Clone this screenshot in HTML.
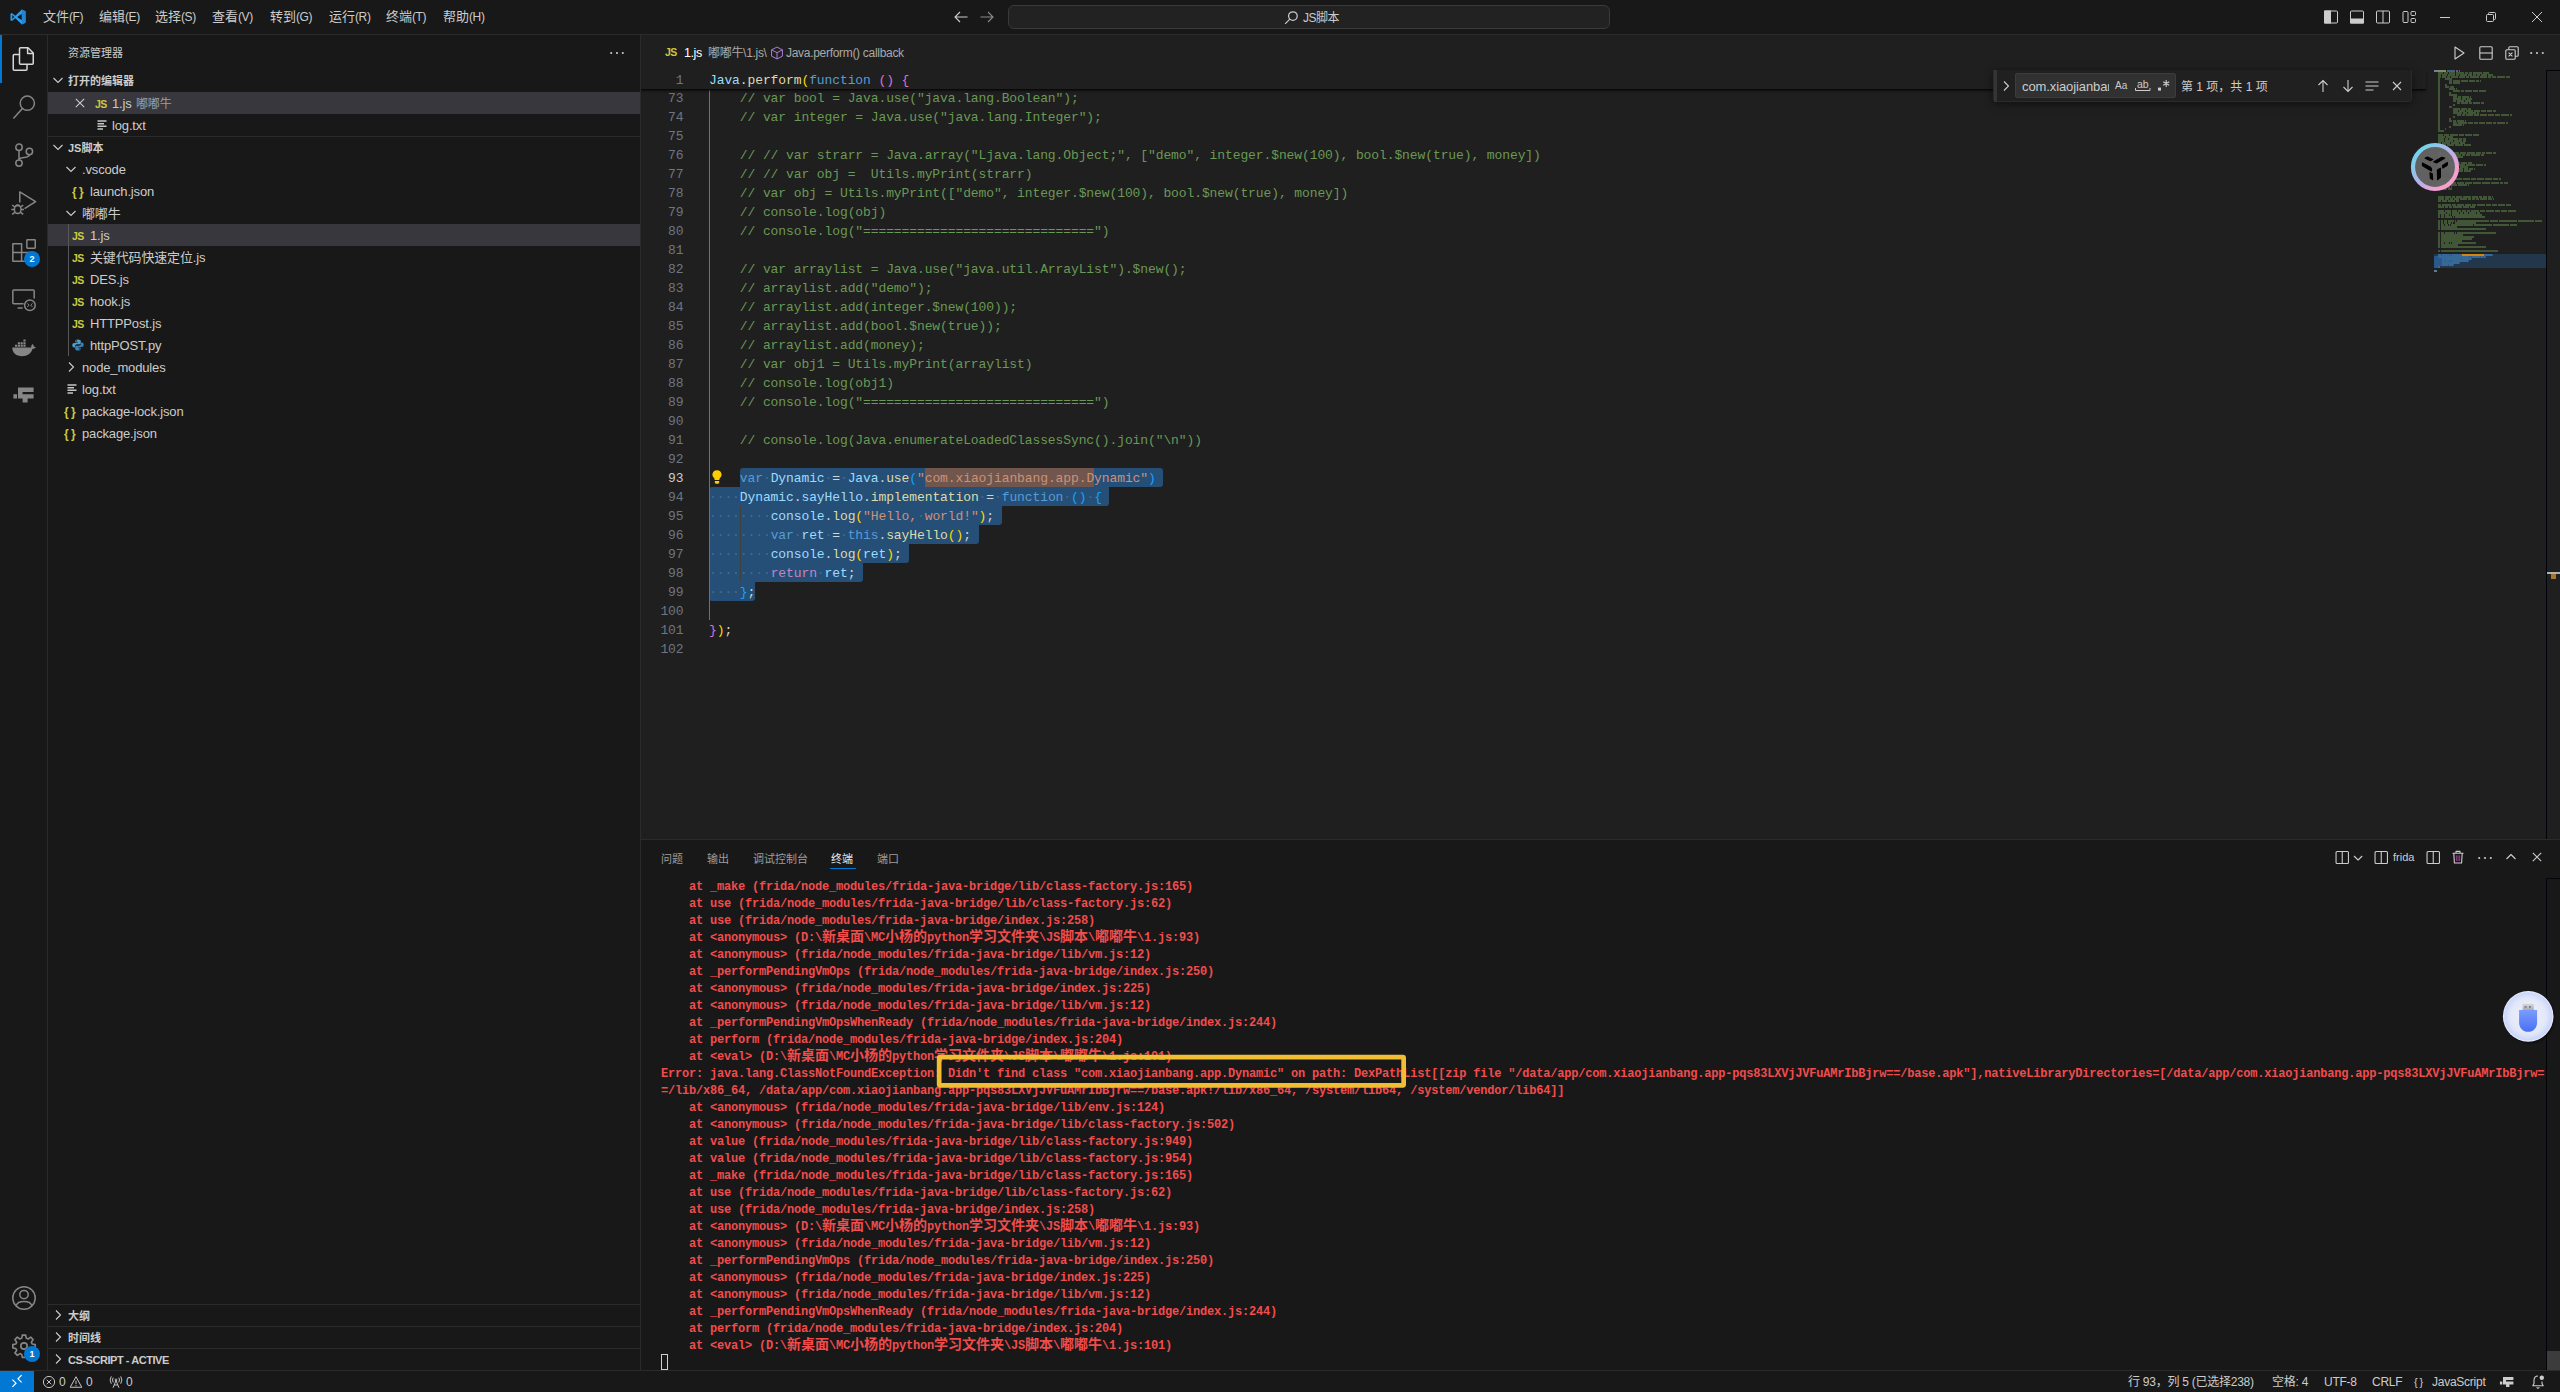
<!DOCTYPE html>
<html lang="zh-CN">
<head>
<meta charset="utf-8">
<title>1.js - JS脚本 - Visual Studio Code</title>
<style>
*{box-sizing:border-box;margin:0;padding:0}
html,body{width:2560px;height:1392px;overflow:hidden;background:#181818}
body{position:relative;font-family:"Liberation Sans","Noto Sans CJK SC",sans-serif;font-size:13px;color:#cccccc;-webkit-font-smoothing:antialiased}
.abs{position:absolute}
svg{display:block;overflow:visible}
/* ---------- title bar ---------- */
#title{position:absolute;left:0;top:0;width:2560px;height:35px;background:#181818;border-bottom:1px solid #2b2b2b}
#title .menu{position:absolute;top:0;height:34px;line-height:34px;font-size:13px;color:#cccccc;white-space:nowrap}
#title .menu i{font-style:normal;font-size:12px;letter-spacing:-0.4px}
#cmd{position:absolute;left:1008px;top:5px;width:602px;height:24px;border:1px solid #3a3a3a;border-radius:6px;background:#222222}
#cmd span{position:absolute;left:294px;top:1px;line-height:22px;font-size:12px;color:#cccccc;letter-spacing:-0.5px}
/* ---------- activity bar ---------- */
#act{position:absolute;left:0;top:35px;width:48px;height:1335px;background:#181818;border-right:1px solid #2b2b2b}
#act .ind{position:absolute;left:0;top:0;width:2px;height:48px;background:#0078d4}
.badge{position:absolute;width:16px;height:16px;border-radius:8px;background:#0078d4;color:#fff;font-size:9px;font-weight:bold;line-height:16px;text-align:center}
/* ---------- side bar ---------- */
#side{position:absolute;left:48px;top:35px;width:593px;height:1335px;background:#181818;border-right:1px solid #2b2b2b}
#side .row{position:absolute;left:0;width:592px;height:22px;line-height:22px;white-space:nowrap;color:#cccccc;font-size:13px}
#side .row.sel{background:#37373d}
#side .hdr{font-weight:bold;font-size:11px}
#side .hline{position:absolute;left:0;width:592px;height:1px;background:#2b2b2b}
.t{position:absolute;top:1px;letter-spacing:-0.15px}
.hdr .t{letter-spacing:0}
.hdr .t.cs{letter-spacing:-0.45px}
.js{position:absolute;top:1px;font-size:10.5px;font-weight:bold;color:#cbcb41;letter-spacing:-0.7px}
.json{position:absolute;top:0.5px;font-size:12px;font-weight:bold;color:#cbcb41}
.dim{color:#9d9d9d;font-size:12px}
/* ---------- editor ---------- */
#ed{position:absolute;left:641px;top:35px;width:1919px;height:804px;background:#1f1f1f;overflow:hidden}
.bc{line-height:22px;font-size:12px;color:#a9a9a9;white-space:nowrap;letter-spacing:-0.3px}
#code{position:absolute;left:0;top:0;width:1919px;height:804px}
.ln{margin-top:1px;position:absolute;left:0;width:42.5px;height:19px;line-height:19px;text-align:right;font-family:"Liberation Mono","DejaVu Sans Mono",monospace;font-size:13px;letter-spacing:-0.1px;color:#6e7681}
.ln.cur{color:#cccccc}
.cl{margin-top:1px;position:absolute;left:68px;height:19px;line-height:19px;white-space:pre;font-family:"Liberation Mono","DejaVu Sans Mono",monospace;font-size:13px;letter-spacing:-0.1px;color:#d4d4d4}
.cl span,.cl i{display:inline}
i.ws{font-style:normal;color:rgba(255,255,255,0.17)}
.selr{position:absolute;height:19px;background:#264f78}
#sticky{position:absolute;left:0;top:35px;width:1785px;height:19px;background:#1f1f1f;box-shadow:0 1px 0 #090909, 0 2px 2px rgba(0,0,0,0.6)}
#find{position:absolute;left:1352px;top:35px;width:419px;height:32px;background:#202020;border:1px solid #2b2b2b;border-top:none;border-radius:0 0 4px 4px;box-shadow:0 2px 8px rgba(0,0,0,0.5)}
/* ---------- panel ---------- */
#panel{position:absolute;left:641px;top:839px;width:1919px;height:531px;background:#181818;border-top:1px solid #2b2b2b;overflow:hidden}
.ptab{position:absolute;top:8px;line-height:22px;font-size:11px;color:#9d9d9d;white-space:nowrap}
.ptab.act{color:#e7e7e7}
#term{position:absolute;left:20px;top:0;width:1900px;height:531px}
.tl{position:absolute;left:0;height:17px;line-height:17px;white-space:pre;font-family:"Liberation Mono","Noto Sans CJK SC",monospace;font-weight:bold;font-size:12px;letter-spacing:-0.2px;color:#f14c4c}
.tl b.cj{line-height:0;font-family:"Noto Sans CJK SC",sans-serif;font-weight:bold;font-size:14px;letter-spacing:0}
/* ---------- status ---------- */
#status{position:absolute;left:0;top:1370px;width:2560px;height:22px;background:#181818;border-top:1px solid #2b2b2b;font-size:12px;color:#cccccc}
#status .s{position:absolute;top:1px;line-height:21px;white-space:nowrap;letter-spacing:-0.25px}
</style>
</head>
<body>
<div id="title">
  <svg class="abs" style="left:10px;top:9px" width="16" height="16" viewBox="0 0 100 100"><path d="M74 3 L97 14 V86 L74 97 L33 58 L12 75 L3 70 V30 L12 25 L33 42 Z M74 29 L45 50 L74 71 Z M14 38 V62 L27 50 Z" fill="#2a9df0" fill-rule="evenodd"/><path d="M74 3 L97 14 V86 L74 97 Z" fill="#1f86d6"/></svg>
  <div class="menu" style="left:43px">文件<i>(F)</i></div>
  <div class="menu" style="left:99px">编辑<i>(E)</i></div>
  <div class="menu" style="left:155px">选择<i>(S)</i></div>
  <div class="menu" style="left:212px">查看<i>(V)</i></div>
  <div class="menu" style="left:270px">转到<i>(G)</i></div>
  <div class="menu" style="left:329px">运行<i>(R)</i></div>
  <div class="menu" style="left:386px">终端<i>(T)</i></div>
  <div class="menu" style="left:443px">帮助<i>(H)</i></div>
  <svg class="abs" style="left:953px;top:9px" width="16" height="16" viewBox="0 0 16 16" fill="none" stroke="#cccccc" stroke-width="1.1"><path d="M14.5 8 H2 M7 3 L2 8 L7 13"/></svg>
  <svg class="abs" style="left:979px;top:9px" width="16" height="16" viewBox="0 0 16 16" fill="none" stroke="#8a8a8a" stroke-width="1.1"><path d="M1.5 8 H14 M9 3 L14 8 L9 13"/></svg>
  <div id="cmd">
    <svg class="abs" style="left:275px;top:4px" width="15" height="15" viewBox="0 0 16 16" fill="none" stroke="#cccccc" stroke-width="1.3"><circle cx="9.5" cy="6.5" r="4.6"/><path d="M6.2 9.8 L1.2 14.8"/></svg>
    <span>JS脚本</span>
  </div>
  <!-- layout controls -->
  <svg class="abs" style="left:2323px;top:9px" width="16" height="16" viewBox="0 0 16 16" fill="none" stroke="#cccccc" stroke-width="1"><rect x="1.5" y="2" width="13" height="12" rx="1"/><rect x="1.5" y="2" width="6" height="12" fill="#cccccc"/></svg>
  <svg class="abs" style="left:2349px;top:9px" width="16" height="16" viewBox="0 0 16 16" fill="none" stroke="#cccccc" stroke-width="1"><rect x="1.5" y="2" width="13" height="12" rx="1"/><rect x="1.5" y="10" width="13" height="4" fill="#cccccc"/></svg>
  <svg class="abs" style="left:2375px;top:9px" width="16" height="16" viewBox="0 0 16 16" fill="none" stroke="#cccccc" stroke-width="1"><rect x="1.5" y="2" width="13" height="12" rx="1"/><path d="M8 2 V14"/></svg>
  <svg class="abs" style="left:2401px;top:9px" width="16" height="16" viewBox="0 0 16 16" fill="none" stroke="#cccccc" stroke-width="1"><rect x="2" y="2.5" width="5" height="11" rx="1"/><rect x="10" y="2.5" width="4.5" height="4" rx="1"/><rect x="10" y="9.5" width="4.5" height="4" rx="1"/></svg>
  <svg class="abs" style="left:2437px;top:9px" width="16" height="16" viewBox="0 0 16 16" fill="none" stroke="#cccccc" stroke-width="1"><path d="M3 8.5 H13"/></svg>
  <svg class="abs" style="left:2483px;top:9px" width="16" height="16" viewBox="0 0 16 16" fill="none" stroke="#cccccc" stroke-width="1"><rect x="3.5" y="5.5" width="7" height="7" rx="1"/><path d="M5.5 5.5 V4.5 Q5.5 3.5 6.5 3.5 H11.5 Q12.5 3.5 12.5 4.5 V9.5 Q12.5 10.5 11.5 10.5 H10.5"/></svg>
  <svg class="abs" style="left:2529px;top:9px" width="16" height="16" viewBox="0 0 16 16" fill="none" stroke="#cccccc" stroke-width="1"><path d="M3 3 L13 13 M13 3 L3 13"/></svg>
</div>

<div id="act">
  <div class="ind"></div>
  <!-- explorer (active) -->
  <svg class="abs" style="left:12px;top:12px" width="24" height="24" viewBox="0 0 24 24" fill="none" stroke="#d7d7d7" stroke-width="1.5" stroke-linejoin="round"><path d="M8.5 0.75 H16 L21.25 6 V16.25 Q21.25 17.25 20.25 17.25 H8.5 Q7.5 17.25 7.5 16.25 V1.75 Q7.5 0.75 8.5 0.75 Z"/><path d="M15.6 1 V6.4 H21"/><path d="M7.3 7.5 H2.25 Q1.25 7.5 1.25 8.5 V22.25 Q1.25 23.25 2.25 23.25 H14 Q15 23.25 15 22.25 V17.5"/></svg>
  <!-- search -->
  <svg class="abs" style="left:12px;top:60px" width="24" height="24" viewBox="0 0 24 24" fill="none" stroke="#868686" stroke-width="1.5"><circle cx="15.3" cy="8.2" r="7.1"/><path d="M10.4 13.4 L1.4 23.4"/></svg>
  <!-- scm -->
  <svg class="abs" style="left:12px;top:108px" width="24" height="24" viewBox="0 0 24 24" fill="none" stroke="#868686" stroke-width="1.5"><circle cx="7" cy="4.2" r="3.2"/><circle cx="7" cy="20.1" r="3.2"/><circle cx="17.4" cy="8.5" r="3.2"/><path d="M7 7.4 V16.9 M17.4 11.7 C17.4 16 7 13 7 16.9"/></svg>
  <!-- debug -->
  <svg class="abs" style="left:12px;top:156px" width="24" height="24" viewBox="0 0 24 24" fill="none" stroke="#868686" stroke-width="1.5" stroke-linejoin="round"><path d="M7.8 11.4 V0.9 L23.6 10.6 L12.6 17.6"/><ellipse cx="5.7" cy="18.6" rx="3.3" ry="4"/><path d="M3.4 15.2 Q5.7 12.8 8 15.2 M-0.6 18.6 H2.4 M9 18.6 H12 M0.2 14.2 L2.8 16 M11.2 14.2 L8.6 16 M0.2 23.4 L2.8 21.4 M11.2 23.4 L8.6 21.4"/></svg>
  <!-- extensions -->
  <svg class="abs" style="left:12px;top:204px" width="24" height="24" viewBox="0 0 24 24" fill="none" stroke="#868686" stroke-width="1.5" stroke-linejoin="round"><path d="M0.85 4.75 H9.6 V13.5 H0.85 Z M0.85 13.5 V22.25 H9.6 V13.5 M9.6 22.25 H18.35 V13.5 H9.6"/><rect x="14.85" y="0.75" width="8.4" height="8.4" rx="0.6"/></svg>
  <div class="badge" style="left:24px;top:216px">2</div>
  <!-- remote explorer -->
  <svg class="abs" style="left:12px;top:252px" width="24" height="24" viewBox="0 0 24 24" fill="none" stroke="#868686" stroke-width="1.5" stroke-linejoin="round"><path d="M11.6 16.8 H1.8 Q0.85 16.8 0.85 15.8 V4 Q0.85 3 1.8 3 H21.2 Q22.2 3 22.2 4 V11.6"/><path d="M5.6 21 H10.6"/><circle cx="17.9" cy="18.2" r="5.3"/><path d="M15.4 16.4 L17 18.2 L15.4 20 M20.4 16.4 L18.8 18.2 L20.4 20" stroke-width="1"/></svg>
  <!-- docker -->
  <svg class="abs" style="left:12px;top:302px" width="24" height="24" viewBox="0 0 24 24" fill="#868686" stroke="none"><path d="M0.2 10.6 H19.2 C19 9.2 19.6 7.8 20.6 7 C21.6 7.8 22 9 21.8 9.8 C22.6 9.6 23.4 9.8 23.8 10.2 C23.2 11.4 21.8 11.8 20.6 11.8 C19 16.6 15.6 19.2 10 19.2 C4.4 19.2 0.4 16.4 0.2 10.6 Z"/><path d="M3 7.8 h2.2 v2 h-2.2z M5.8 7.8 h2.2 v2 h-2.2z M8.6 7.8 h2.2 v2 h-2.2z M11.4 7.8 h2.2 v2 h-2.2z M5.8 5.2 h2.2 v2 h-2.2z M8.6 5.2 h2.2 v2 h-2.2z M11.4 5.2 h2.2 v2 h-2.2z M11.4 2.6 h2.2 v2 h-2.2z"/></svg>
  <!-- pixel F icon -->
  <svg class="abs" style="left:12px;top:348px" width="24" height="24" viewBox="0 0 24 24" fill="#868686" stroke="none"><path d="M6 4.6 H21.6 V9 H10.6 V11.2 H21.6 V15.6 H15.6 V19.6 H10.6 V15.6 H6 V11.2 H6 Z M1.4 11.2 H5 V15.6 H1.4 Z"/></svg>
  <!-- account -->
  <svg class="abs" style="left:12px;top:1251px" width="24" height="24" viewBox="0 0 24 24" fill="none" stroke="#868686" stroke-width="1.5"><circle cx="12" cy="12" r="11.2"/><circle cx="12" cy="8.6" r="4.2"/><path d="M4.2 20 C5.2 14 18.8 14 19.8 20"/></svg>
  <!-- gear -->
  <svg class="abs" style="left:12px;top:1299px" width="24" height="24" viewBox="-0.8 -0.4 25.6 25.6" fill="none" stroke="#868686" stroke-width="1.75" stroke-linejoin="round"><path d="M10.2 0.8 h3.6 l0.6 3.2 l2 0.9 l2.7 -1.9 l2.6 2.6 l-1.9 2.7 l0.9 2 l3.2 0.6 v3.6 l-3.2 0.6 l-0.9 2 l1.9 2.7 l-2.6 2.6 l-2.7 -1.9 l-2 0.9 l-0.6 3.2 h-3.6 l-0.6 -3.2 l-2 -0.9 l-2.7 1.9 l-2.6 -2.6 l1.9 -2.7 l-0.9 -2 l-3.2 -0.6 v-3.6 l3.2 -0.6 l0.9 -2 l-1.9 -2.7 l2.6 -2.6 l2.7 1.9 l2 -0.9 z"/><circle cx="12" cy="12.4" r="3.4"/></svg>
  <div class="badge" style="left:24px;top:1311px">1</div>
</div>

<div id="side">
<div class="abs" style="left:20px;top:1px;font-size:11px;line-height:34px;color:#cccccc">资源管理器</div>
<svg class="abs" style="left:561px;top:10px" width="16" height="16" viewBox="0 0 16 16" fill="#cccccc"><circle cx="2.2" cy="8" r="1.05"/><circle cx="8" cy="8" r="1.05"/><circle cx="13.8" cy="8" r="1.05"/></svg>
<div class="row hdr" style="top:34px"><svg class="abs" style="left:2px;top:3px" width="16" height="16" viewBox="0 0 16 16" fill="none" stroke="#cccccc" stroke-width="1.1"><path d="M3.5 6 L8 10.5 L12.5 6"/></svg><span class="t" style="left:20px">打开的编辑器</span></div>
<div class="row sel" style="top:57px"><svg class="abs" style="left:24px;top:3px" width="16" height="16" viewBox="0 0 16 16" fill="none" stroke="#cccccc" stroke-width="1.1"><path d="M3.8 3.8 L12.2 12.2 M12.2 3.8 L3.8 12.2"/></svg><span class="js" style="left:47px">JS</span><span class="t" style="left:64px">1.js</span><span class="t dim" style="left:88px">嘟嘟牛</span></div>
<div class="row" style="top:79px"><svg class="abs" style="left:49px;top:6px" width="11" height="10" viewBox="0 0 11 10" fill="none" stroke="#c5c5c5" stroke-width="1.4"><path d="M0.5 1 H9.5 M0.5 3.7 H7 M0.5 6.3 H9.5 M0.5 9 H6"/></svg><span class="t" style="left:64px">log.txt</span></div>
<div class="hline" style="top:101px"></div>
<div class="row hdr" style="top:101px"><svg class="abs" style="left:2px;top:3px" width="16" height="16" viewBox="0 0 16 16" fill="none" stroke="#cccccc" stroke-width="1.1"><path d="M3.5 6 L8 10.5 L12.5 6"/></svg><span class="t" style="left:20px">JS脚本</span></div>
<div class="row" style="top:123px"><svg class="abs" style="left:15px;top:3px" width="16" height="16" viewBox="0 0 16 16" fill="none" stroke="#cccccc" stroke-width="1.1"><path d="M3.5 6 L8 10.5 L12.5 6"/></svg><span class="t" style="left:34px">.vscode</span></div>
<div class="row" style="top:145px"><span class="json" style="left:24px">{&#8201;}</span><span class="t" style="left:42px">launch.json</span></div>
<div class="row" style="top:167px"><svg class="abs" style="left:15px;top:3px" width="16" height="16" viewBox="0 0 16 16" fill="none" stroke="#cccccc" stroke-width="1.1"><path d="M3.5 6 L8 10.5 L12.5 6"/></svg><span class="t" style="left:34px">嘟嘟牛</span></div>
<div class="row sel" style="top:189px"><span class="js" style="left:24px">JS</span><span class="t" style="left:42px">1.js</span></div>
<div class="row" style="top:211px"><span class="js" style="left:24px">JS</span><span class="t" style="left:42px">关键代码快速定位.js</span></div>
<div class="row" style="top:233px"><span class="js" style="left:24px">JS</span><span class="t" style="left:42px">DES.js</span></div>
<div class="row" style="top:255px"><span class="js" style="left:24px">JS</span><span class="t" style="left:42px">hook.js</span></div>
<div class="row" style="top:277px"><span class="js" style="left:24px">JS</span><span class="t" style="left:42px">HTTPPost.js</span></div>
<div class="row" style="top:299px"><svg class="abs" style="left:24px;top:5px" width="12" height="12" viewBox="0 0 12 12"><path d="M5.9 0.4 C3.6 0.4 3.4 1.4 3.4 2.2 V3.4 H6.1 V4 H2.2 C1 4 0.3 4.9 0.3 6.2 C0.3 7.5 1 8.4 2.2 8.4 H3.2 V7 C3.2 6 4 5.3 5 5.3 H7.4 C8.2 5.3 8.8 4.7 8.8 3.9 V2.2 C8.8 1.2 8 0.4 5.9 0.4 Z" fill="#4a9fd0"/><path d="M6.1 11.6 C8.4 11.6 8.6 10.6 8.6 9.8 V8.6 H5.9 V8 H9.8 C11 8 11.7 7.1 11.7 5.8 C11.7 4.5 11 3.6 9.8 3.6 H8.8 V5 C8.8 6 8 6.7 7 6.7 H4.6 C3.8 6.7 3.2 7.3 3.2 8.1 V9.8 C3.2 10.8 4 11.6 6.1 11.6 Z" fill="#3c7fb0"/><circle cx="4.6" cy="1.9" r="0.55" fill="#181818"/><circle cx="7.4" cy="10.1" r="0.55" fill="#181818"/></svg><span class="t" style="left:42px">httpPOST.py</span></div>
<div class="row" style="top:321px"><svg class="abs" style="left:15px;top:3px" width="16" height="16" viewBox="0 0 16 16" fill="none" stroke="#cccccc" stroke-width="1.1"><path d="M6 3.5 L10.5 8 L6 12.5"/></svg><span class="t" style="left:34px">node_modules</span></div>
<div class="row" style="top:343px"><svg class="abs" style="left:19px;top:6px" width="11" height="10" viewBox="0 0 11 10" fill="none" stroke="#c5c5c5" stroke-width="1.4"><path d="M0.5 1 H9.5 M0.5 3.7 H7 M0.5 6.3 H9.5 M0.5 9 H6"/></svg><span class="t" style="left:34px">log.txt</span></div>
<div class="row" style="top:365px"><span class="json" style="left:16px">{&#8201;}</span><span class="t" style="left:34px">package-lock.json</span></div>
<div class="row" style="top:387px"><span class="json" style="left:16px">{&#8201;}</span><span class="t" style="left:34px">package.json</span></div>
<div class="abs" style="left:20px;top:189px;width:1px;height:132px;background:#585858"></div>
<div class="hline" style="top:1269px"></div>
<div class="row hdr" style="top:1269px"><svg class="abs" style="left:2px;top:3px" width="16" height="16" viewBox="0 0 16 16" fill="none" stroke="#cccccc" stroke-width="1.1"><path d="M6 3.5 L10.5 8 L6 12.5"/></svg><span class="t" style="left:20px">大纲</span></div>
<div class="hline" style="top:1291px"></div>
<div class="row hdr" style="top:1291px"><svg class="abs" style="left:2px;top:3px" width="16" height="16" viewBox="0 0 16 16" fill="none" stroke="#cccccc" stroke-width="1.1"><path d="M6 3.5 L10.5 8 L6 12.5"/></svg><span class="t" style="left:20px">时间线</span></div>
<div class="hline" style="top:1313px"></div>
<div class="row hdr" style="top:1313px"><svg class="abs" style="left:2px;top:3px" width="16" height="16" viewBox="0 0 16 16" fill="none" stroke="#cccccc" stroke-width="1.1"><path d="M6 3.5 L10.5 8 L6 12.5"/></svg><span class="t cs" style="left:20px">CS-SCRIPT - ACTIVE</span></div>
</div>

<div id="ed">
<div class="abs" style="left:0;top:0;width:1919px;height:35px;background:#1f1f1f"></div>
<span class="js abs" style="left:24px;top:6px;line-height:22px">JS</span>
<span class="abs" style="left:43px;top:7px;line-height:22px;font-size:12.5px;letter-spacing:-0.4px;color:#ffffff">1.js</span>
<span class="abs bc" style="left:67px;top:7px">嘟嘟牛\1.js\</span>
<svg class="abs" style="left:129px;top:11px" width="14" height="14" viewBox="0 0 16 16" fill="none" stroke="#b180d7" stroke-width="1.1" stroke-linejoin="round"><path d="M8 1.2 L14.2 4.4 V11.6 L8 14.8 L1.8 11.6 V4.4 Z M1.8 4.4 L8 7.6 L14.2 4.4 M8 7.6 V14.8"/></svg>
<span class="abs bc" style="left:145px;top:7px">Java.perform() callback</span>
<svg class="abs" style="left:1810px;top:10px" width="16" height="16" viewBox="0 0 16 16" fill="none" stroke="#cccccc" stroke-width="1.1" stroke-linejoin="round"><path d="M4 2 L13 8 L4 14 Z"/></svg>
<svg class="abs" style="left:1837px;top:10px" width="16" height="16" viewBox="0 0 16 16" fill="none" stroke="#cccccc" stroke-width="1.1"><rect x="1.8" y="1.8" width="12.4" height="12.4" rx="1"/><path d="M1.8 8 H14.2"/></svg>
<svg class="abs" style="left:1862.5px;top:10px" width="16" height="16" viewBox="0 0 16 16" fill="none" stroke="#cccccc" stroke-width="1.1"><rect x="1.8" y="4.8" width="9.4" height="9.4" rx="1"/><path d="M4.8 4.8 V2.8 Q4.8 1.8 5.8 1.8 H13.2 Q14.2 1.8 14.2 2.8 V10.2 Q14.2 11.2 13.2 11.2 H11.2 M4.6 7.6 L8.4 11.4 M8.4 7.6 L4.6 11.4"/></svg>
<svg class="abs" style="left:1888px;top:10px" width="16" height="16" viewBox="0 0 16 16" fill="#cccccc"><circle cx="2.2" cy="8" r="1.05"/><circle cx="8" cy="8" r="1.05"/><circle cx="13.8" cy="8" r="1.05"/></svg>
<div id="code">
<div class="selr" style="left:98.8px;top:433px;width:423.5px;border-radius:3px 3px 3px 0"></div>
<div class="selr" style="left:68.0px;top:452px;width:400.4px;border-radius:3px 0 3px 0"></div>
<div class="selr" style="left:68.0px;top:471px;width:292.6px;border-radius:0 0 3px 0"></div>
<div class="selr" style="left:68.0px;top:490px;width:269.5px;border-radius:0 0 3px 0"></div>
<div class="selr" style="left:68.0px;top:509px;width:200.2px;border-radius:0 0 3px 0"></div>
<div class="selr" style="left:68.0px;top:528px;width:154.0px;border-radius:0 0 3px 0"></div>
<div class="selr" style="left:68.0px;top:547px;width:46.2px;border-radius:0 0 3px 3px"></div>
<div class="abs" style="left:283.6px;top:433px;width:169.4px;height:19px;background:#70564c"></div>
<div class="abs" style="left:68px;top:53px;width:1px;height:532px;background:#707070"></div>
<div class="abs" style="left:99px;top:471px;width:1px;height:76px;background:#404040"></div>
<div class="ln" style="top:53px">73</div>
<div class="cl" style="top:53px"><span style="color:#d4d4d4">    </span><span style="color:#6a9955">// var bool = Java.use("java.lang.Boolean");</span></div>
<div class="ln" style="top:72px">74</div>
<div class="cl" style="top:72px"><span style="color:#d4d4d4">    </span><span style="color:#6a9955">// var integer = Java.use("java.lang.Integer");</span></div>
<div class="ln" style="top:91px">75</div>
<div class="ln" style="top:110px">76</div>
<div class="cl" style="top:110px"><span style="color:#d4d4d4">    </span><span style="color:#6a9955">// // var strarr = Java.array("Ljava.lang.Object;", ["demo", integer.$new(100), bool.$new(true), money])</span></div>
<div class="ln" style="top:129px">77</div>
<div class="cl" style="top:129px"><span style="color:#d4d4d4">    </span><span style="color:#6a9955">// // var obj =  Utils.myPrint(strarr)</span></div>
<div class="ln" style="top:148px">78</div>
<div class="cl" style="top:148px"><span style="color:#d4d4d4">    </span><span style="color:#6a9955">// var obj = Utils.myPrint(["demo", integer.$new(100), bool.$new(true), money])</span></div>
<div class="ln" style="top:167px">79</div>
<div class="cl" style="top:167px"><span style="color:#d4d4d4">    </span><span style="color:#6a9955">// console.log(obj)</span></div>
<div class="ln" style="top:186px">80</div>
<div class="cl" style="top:186px"><span style="color:#d4d4d4">    </span><span style="color:#6a9955">// console.log("==============================")</span></div>
<div class="ln" style="top:205px">81</div>
<div class="ln" style="top:224px">82</div>
<div class="cl" style="top:224px"><span style="color:#d4d4d4">    </span><span style="color:#6a9955">// var arraylist = Java.use("java.util.ArrayList").$new();</span></div>
<div class="ln" style="top:243px">83</div>
<div class="cl" style="top:243px"><span style="color:#d4d4d4">    </span><span style="color:#6a9955">// arraylist.add("demo");</span></div>
<div class="ln" style="top:262px">84</div>
<div class="cl" style="top:262px"><span style="color:#d4d4d4">    </span><span style="color:#6a9955">// arraylist.add(integer.$new(100));</span></div>
<div class="ln" style="top:281px">85</div>
<div class="cl" style="top:281px"><span style="color:#d4d4d4">    </span><span style="color:#6a9955">// arraylist.add(bool.$new(true));</span></div>
<div class="ln" style="top:300px">86</div>
<div class="cl" style="top:300px"><span style="color:#d4d4d4">    </span><span style="color:#6a9955">// arraylist.add(money);</span></div>
<div class="ln" style="top:319px">87</div>
<div class="cl" style="top:319px"><span style="color:#d4d4d4">    </span><span style="color:#6a9955">// var obj1 = Utils.myPrint(arraylist)</span></div>
<div class="ln" style="top:338px">88</div>
<div class="cl" style="top:338px"><span style="color:#d4d4d4">    </span><span style="color:#6a9955">// console.log(obj1)</span></div>
<div class="ln" style="top:357px">89</div>
<div class="cl" style="top:357px"><span style="color:#d4d4d4">    </span><span style="color:#6a9955">// console.log("==============================")</span></div>
<div class="ln" style="top:376px">90</div>
<div class="ln" style="top:395px">91</div>
<div class="cl" style="top:395px"><span style="color:#d4d4d4">    </span><span style="color:#6a9955">// console.log(Java.enumerateLoadedClassesSync().join("\n"))</span></div>
<div class="ln" style="top:414px">92</div>
<div class="ln cur" style="top:433px">93</div>
<div class="cl" style="top:433px"><span style="color:#d4d4d4">    </span><span style="color:#569cd6">var</span><i class="ws">·</i><span style="color:#9cdcfe">Dynamic</span><i class="ws">·</i><span style="color:#d4d4d4">=</span><i class="ws">·</i><span style="color:#9cdcfe">Java</span><span style="color:#d4d4d4">.</span><span style="color:#dcdcaa">use</span><span style="color:#179fff">(</span><span style="color:#ce9178">"com.xiaojianbang.app.Dynamic"</span><span style="color:#179fff">)</span></div>
<div class="ln" style="top:452px">94</div>
<div class="cl" style="top:452px"><i class="ws">····</i><span style="color:#9cdcfe">Dynamic</span><span style="color:#d4d4d4">.</span><span style="color:#9cdcfe">sayHello</span><span style="color:#d4d4d4">.</span><span style="color:#dcdcaa">implementation</span><i class="ws">·</i><span style="color:#d4d4d4">=</span><i class="ws">·</i><span style="color:#569cd6">function</span><i class="ws">·</i><span style="color:#179fff">()</span><i class="ws">·</i><span style="color:#179fff">{</span></div>
<div class="ln" style="top:471px">95</div>
<div class="cl" style="top:471px"><i class="ws">········</i><span style="color:#9cdcfe">console</span><span style="color:#d4d4d4">.</span><span style="color:#dcdcaa">log</span><span style="color:#ffd700">(</span><span style="color:#ce9178">"Hello,</span><i class="ws">·</i><span style="color:#ce9178">world!"</span><span style="color:#ffd700">)</span><span style="color:#d4d4d4">;</span></div>
<div class="ln" style="top:490px">96</div>
<div class="cl" style="top:490px"><i class="ws">········</i><span style="color:#569cd6">var</span><i class="ws">·</i><span style="color:#9cdcfe">ret</span><i class="ws">·</i><span style="color:#d4d4d4">=</span><i class="ws">·</i><span style="color:#569cd6">this</span><span style="color:#d4d4d4">.</span><span style="color:#dcdcaa">sayHello</span><span style="color:#ffd700">()</span><span style="color:#d4d4d4">;</span></div>
<div class="ln" style="top:509px">97</div>
<div class="cl" style="top:509px"><i class="ws">········</i><span style="color:#9cdcfe">console</span><span style="color:#d4d4d4">.</span><span style="color:#dcdcaa">log</span><span style="color:#ffd700">(</span><span style="color:#9cdcfe">ret</span><span style="color:#ffd700">)</span><span style="color:#d4d4d4">;</span></div>
<div class="ln" style="top:528px">98</div>
<div class="cl" style="top:528px"><i class="ws">········</i><span style="color:#c586c0">return</span><i class="ws">·</i><span style="color:#9cdcfe">ret</span><span style="color:#d4d4d4">;</span></div>
<div class="ln" style="top:547px">99</div>
<div class="cl" style="top:547px"><i class="ws">····</i><span style="color:#179fff">}</span><span style="color:#d4d4d4">;</span></div>
<div class="ln" style="top:566px">100</div>
<div class="ln" style="top:585px">101</div>
<div class="cl" style="top:585px"><span style="color:#da70d6">}</span><span style="color:#ffd700">)</span><span style="color:#d4d4d4">;</span></div>
<div class="ln" style="top:604px">102</div>
<svg class="abs" style="left:68px;top:434px" width="16" height="16" viewBox="0 0 16 16"><path d="M8 1.2 C5.2 1.2 3.4 3.2 3.4 5.6 C3.4 7.2 4.2 8.2 5 9 C5.4 9.4 5.6 9.8 5.6 10.4 V11 H10.4 V10.4 C10.4 9.8 10.6 9.4 11 9 C11.8 8.2 12.6 7.2 12.6 5.6 C12.6 3.2 10.8 1.2 8 1.2 Z" fill="#ffcc00"/><path d="M5.8 12 H10.2 V13.2 C10.2 14.2 9.4 14.8 8 14.8 C6.6 14.8 5.8 14.2 5.8 13.2 Z" fill="#ffcc00"/><path d="M5.6 11.5 H10.4" stroke="#1f1f1f" stroke-width="0.8"/></svg>
</div>
<div id="sticky"><div class="ln" style="top:0">1</div><div class="cl" style="top:0"><span style="color:#9cdcfe">Java</span><span style="color:#d4d4d4">.</span><span style="color:#dcdcaa">perform</span><span style="color:#ffd700">(</span><span style="color:#569cd6">function</span><span style="color:#d4d4d4"> </span><span style="color:#da70d6">()</span><span style="color:#d4d4d4"> </span><span style="color:#da70d6">{</span></div></div>
<svg class="abs" style="left:1793px;top:35px" width="126" height="240" viewBox="2434 70 126 240" shape-rendering="crispEdges"><rect x="2434" y="254" width="112" height="14" fill="#264f78" opacity="0.5"/><rect x="2438" y="254" width="55" height="2" fill="#29598a"/><rect x="2434" y="256" width="52" height="2" fill="#29598a"/><rect x="2434" y="258" width="38" height="2" fill="#29598a"/><rect x="2434" y="260" width="35" height="2" fill="#29598a"/><rect x="2434" y="262" width="26" height="2" fill="#29598a"/><rect x="2434" y="264" width="20" height="2" fill="#29598a"/><rect x="2434" y="266" width="6" height="2" fill="#29598a"/><rect x="2434" y="70" width="4" height="1.5" fill="#9cdcfe" opacity="0.55"/><rect x="2438" y="70" width="8" height="1.5" fill="#dcdcaa" opacity="0.55"/><rect x="2447" y="70" width="8" height="1.5" fill="#569cd6" opacity="0.55"/><rect x="2456" y="70" width="2" height="1.5" fill="#da70d6" opacity="0.55"/><rect x="2459" y="70" width="1" height="1.5" fill="#da70d6" opacity="0.55"/><rect x="2438" y="72" width="5" height="1.5" fill="#6a9955" opacity="0.46"/><rect x="2444" y="72" width="4" height="1.5" fill="#6a9955" opacity="0.46"/><rect x="2449" y="72" width="6" height="1.5" fill="#6a9955" opacity="0.46"/><rect x="2456" y="72" width="8" height="1.5" fill="#6a9955" opacity="0.46"/><rect x="2465" y="72" width="3" height="1.5" fill="#6a9955" opacity="0.46"/><rect x="2469" y="72" width="3" height="1.5" fill="#6a9955" opacity="0.46"/><rect x="2473" y="72" width="9" height="1.5" fill="#6a9955" opacity="0.46"/><rect x="2483" y="72" width="6" height="1.5" fill="#6a9955" opacity="0.46"/><rect x="2438" y="74" width="3" height="1.5" fill="#6a9955" opacity="0.46"/><rect x="2442" y="74" width="5" height="1.5" fill="#6a9955" opacity="0.46"/><rect x="2448" y="74" width="7" height="1.5" fill="#6a9955" opacity="0.46"/><rect x="2456" y="74" width="3" height="1.5" fill="#6a9955" opacity="0.46"/><rect x="2460" y="74" width="7" height="1.5" fill="#6a9955" opacity="0.46"/><rect x="2468" y="74" width="4" height="1.5" fill="#6a9955" opacity="0.46"/><rect x="2473" y="74" width="3" height="1.5" fill="#6a9955" opacity="0.46"/><rect x="2477" y="74" width="3" height="1.5" fill="#6a9955" opacity="0.46"/><rect x="2481" y="74" width="6" height="1.5" fill="#6a9955" opacity="0.46"/><rect x="2488" y="74" width="5" height="1.5" fill="#6a9955" opacity="0.46"/><rect x="2438" y="76" width="3" height="1.5" fill="#6a9955" opacity="0.46"/><rect x="2442" y="76" width="4" height="1.5" fill="#6a9955" opacity="0.46"/><rect x="2447" y="76" width="3" height="1.5" fill="#6a9955" opacity="0.46"/><rect x="2451" y="76" width="7" height="1.5" fill="#6a9955" opacity="0.46"/><rect x="2459" y="76" width="6" height="1.5" fill="#6a9955" opacity="0.46"/><rect x="2466" y="76" width="3" height="1.5" fill="#6a9955" opacity="0.46"/><rect x="2470" y="76" width="9" height="1.5" fill="#6a9955" opacity="0.46"/><rect x="2480" y="76" width="7" height="1.5" fill="#6a9955" opacity="0.46"/><rect x="2488" y="76" width="3" height="1.5" fill="#6a9955" opacity="0.46"/><rect x="2492" y="76" width="4" height="1.5" fill="#6a9955" opacity="0.46"/><rect x="2497" y="76" width="8" height="1.5" fill="#6a9955" opacity="0.46"/><rect x="2506" y="76" width="4" height="1.5" fill="#6a9955" opacity="0.46"/><rect x="2438" y="78" width="2" height="1.5" fill="#6a9955" opacity="0.46"/><rect x="2445" y="78" width="7" height="1.5" fill="#6a9955" opacity="0.46"/><rect x="2438" y="80" width="2" height="1.5" fill="#6a9955" opacity="0.46"/><rect x="2449" y="80" width="3" height="1.5" fill="#6a9955" opacity="0.46"/><rect x="2453" y="80" width="7" height="1.5" fill="#6a9955" opacity="0.46"/><rect x="2461" y="80" width="7" height="1.5" fill="#6a9955" opacity="0.46"/><rect x="2469" y="80" width="6" height="1.5" fill="#6a9955" opacity="0.46"/><rect x="2476" y="80" width="3" height="1.5" fill="#6a9955" opacity="0.46"/><rect x="2480" y="80" width="1" height="1.5" fill="#6a9955" opacity="0.46"/><rect x="2438" y="82" width="2" height="1.5" fill="#6a9955" opacity="0.46"/><rect x="2449" y="82" width="3" height="1.5" fill="#6a9955" opacity="0.46"/><rect x="2453" y="82" width="7" height="1.5" fill="#6a9955" opacity="0.46"/><rect x="2438" y="84" width="2" height="1.5" fill="#6a9955" opacity="0.46"/><rect x="2445" y="84" width="2" height="1.5" fill="#6a9955" opacity="0.46"/><rect x="2438" y="86" width="2" height="1.5" fill="#6a9955" opacity="0.46"/><rect x="2445" y="86" width="4" height="1.5" fill="#6a9955" opacity="0.46"/><rect x="2450" y="86" width="4" height="1.5" fill="#6a9955" opacity="0.46"/><rect x="2438" y="88" width="2" height="1.5" fill="#6a9955" opacity="0.46"/><rect x="2449" y="88" width="6" height="1.5" fill="#6a9955" opacity="0.46"/><rect x="2456" y="88" width="1" height="1.5" fill="#6a9955" opacity="0.46"/><rect x="2438" y="90" width="2" height="1.5" fill="#6a9955" opacity="0.46"/><rect x="2453" y="90" width="7" height="1.5" fill="#6a9955" opacity="0.46"/><rect x="2461" y="90" width="3" height="1.5" fill="#6a9955" opacity="0.46"/><rect x="2465" y="90" width="7" height="1.5" fill="#6a9955" opacity="0.46"/><rect x="2473" y="90" width="5" height="1.5" fill="#6a9955" opacity="0.46"/><rect x="2479" y="90" width="7" height="1.5" fill="#6a9955" opacity="0.46"/><rect x="2438" y="92" width="2" height="1.5" fill="#6a9955" opacity="0.46"/><rect x="2449" y="92" width="2" height="1.5" fill="#6a9955" opacity="0.46"/><rect x="2438" y="94" width="2" height="1.5" fill="#6a9955" opacity="0.46"/><rect x="2449" y="94" width="8" height="1.5" fill="#6a9955" opacity="0.46"/><rect x="2438" y="96" width="2" height="1.5" fill="#6a9955" opacity="0.46"/><rect x="2453" y="96" width="4" height="1.5" fill="#6a9955" opacity="0.46"/><rect x="2458" y="96" width="3" height="1.5" fill="#6a9955" opacity="0.46"/><rect x="2462" y="96" width="7" height="1.5" fill="#6a9955" opacity="0.46"/><rect x="2470" y="96" width="1" height="1.5" fill="#6a9955" opacity="0.46"/><rect x="2438" y="98" width="2" height="1.5" fill="#6a9955" opacity="0.46"/><rect x="2453" y="98" width="8" height="1.5" fill="#6a9955" opacity="0.46"/><rect x="2462" y="98" width="4" height="1.5" fill="#6a9955" opacity="0.46"/><rect x="2467" y="98" width="5" height="1.5" fill="#6a9955" opacity="0.46"/><rect x="2438" y="100" width="2" height="1.5" fill="#6a9955" opacity="0.46"/><rect x="2453" y="100" width="3" height="1.5" fill="#6a9955" opacity="0.46"/><rect x="2457" y="100" width="7" height="1.5" fill="#6a9955" opacity="0.46"/><rect x="2465" y="100" width="6" height="1.5" fill="#6a9955" opacity="0.46"/><rect x="2438" y="102" width="2" height="1.5" fill="#6a9955" opacity="0.46"/><rect x="2457" y="102" width="3" height="1.5" fill="#6a9955" opacity="0.46"/><rect x="2461" y="102" width="7" height="1.5" fill="#6a9955" opacity="0.46"/><rect x="2469" y="102" width="3" height="1.5" fill="#6a9955" opacity="0.46"/><rect x="2473" y="102" width="7" height="1.5" fill="#6a9955" opacity="0.46"/><rect x="2481" y="102" width="3" height="1.5" fill="#6a9955" opacity="0.46"/><rect x="2438" y="104" width="2" height="1.5" fill="#6a9955" opacity="0.46"/><rect x="2453" y="104" width="2" height="1.5" fill="#6a9955" opacity="0.46"/><rect x="2438" y="106" width="2" height="1.5" fill="#6a9955" opacity="0.46"/><rect x="2449" y="106" width="3" height="1.5" fill="#6a9955" opacity="0.46"/><rect x="2438" y="108" width="2" height="1.5" fill="#6a9955" opacity="0.46"/><rect x="2453" y="108" width="7" height="1.5" fill="#6a9955" opacity="0.46"/><rect x="2461" y="108" width="6" height="1.5" fill="#6a9955" opacity="0.46"/><rect x="2468" y="108" width="3" height="1.5" fill="#6a9955" opacity="0.46"/><rect x="2438" y="110" width="2" height="1.5" fill="#6a9955" opacity="0.46"/><rect x="2453" y="110" width="5" height="1.5" fill="#6a9955" opacity="0.46"/><rect x="2459" y="110" width="6" height="1.5" fill="#6a9955" opacity="0.46"/><rect x="2466" y="110" width="7" height="1.5" fill="#6a9955" opacity="0.46"/><rect x="2474" y="110" width="6" height="1.5" fill="#6a9955" opacity="0.46"/><rect x="2481" y="110" width="5" height="1.5" fill="#6a9955" opacity="0.46"/><rect x="2487" y="110" width="5" height="1.5" fill="#6a9955" opacity="0.46"/><rect x="2493" y="110" width="3" height="1.5" fill="#6a9955" opacity="0.46"/><rect x="2438" y="112" width="2" height="1.5" fill="#6a9955" opacity="0.46"/><rect x="2453" y="112" width="9" height="1.5" fill="#6a9955" opacity="0.46"/><rect x="2463" y="112" width="4" height="1.5" fill="#6a9955" opacity="0.46"/><rect x="2468" y="112" width="8" height="1.5" fill="#6a9955" opacity="0.46"/><rect x="2477" y="112" width="2" height="1.5" fill="#6a9955" opacity="0.46"/><rect x="2438" y="114" width="2" height="1.5" fill="#6a9955" opacity="0.46"/><rect x="2457" y="114" width="4" height="1.5" fill="#6a9955" opacity="0.46"/><rect x="2462" y="114" width="3" height="1.5" fill="#6a9955" opacity="0.46"/><rect x="2466" y="114" width="7" height="1.5" fill="#6a9955" opacity="0.46"/><rect x="2474" y="114" width="5" height="1.5" fill="#6a9955" opacity="0.46"/><rect x="2480" y="114" width="7" height="1.5" fill="#6a9955" opacity="0.46"/><rect x="2488" y="114" width="6" height="1.5" fill="#6a9955" opacity="0.46"/><rect x="2495" y="114" width="5" height="1.5" fill="#6a9955" opacity="0.46"/><rect x="2501" y="114" width="8" height="1.5" fill="#6a9955" opacity="0.46"/><rect x="2510" y="114" width="2" height="1.5" fill="#6a9955" opacity="0.46"/><rect x="2438" y="116" width="2" height="1.5" fill="#6a9955" opacity="0.46"/><rect x="2453" y="116" width="2" height="1.5" fill="#6a9955" opacity="0.46"/><rect x="2438" y="118" width="2" height="1.5" fill="#6a9955" opacity="0.46"/><rect x="2449" y="118" width="2" height="1.5" fill="#6a9955" opacity="0.46"/><rect x="2438" y="120" width="2" height="1.5" fill="#6a9955" opacity="0.46"/><rect x="2449" y="120" width="3" height="1.5" fill="#6a9955" opacity="0.46"/><rect x="2453" y="120" width="3" height="1.5" fill="#6a9955" opacity="0.46"/><rect x="2457" y="120" width="7" height="1.5" fill="#6a9955" opacity="0.46"/><rect x="2465" y="120" width="1" height="1.5" fill="#6a9955" opacity="0.46"/><rect x="2438" y="122" width="2" height="1.5" fill="#6a9955" opacity="0.46"/><rect x="2453" y="122" width="4" height="1.5" fill="#6a9955" opacity="0.46"/><rect x="2458" y="122" width="9" height="1.5" fill="#6a9955" opacity="0.46"/><rect x="2468" y="122" width="5" height="1.5" fill="#6a9955" opacity="0.46"/><rect x="2474" y="122" width="4" height="1.5" fill="#6a9955" opacity="0.46"/><rect x="2479" y="122" width="6" height="1.5" fill="#6a9955" opacity="0.46"/><rect x="2486" y="122" width="6" height="1.5" fill="#6a9955" opacity="0.46"/><rect x="2493" y="122" width="3" height="1.5" fill="#6a9955" opacity="0.46"/><rect x="2497" y="122" width="8" height="1.5" fill="#6a9955" opacity="0.46"/><rect x="2506" y="122" width="2" height="1.5" fill="#6a9955" opacity="0.46"/><rect x="2438" y="124" width="2" height="1.5" fill="#6a9955" opacity="0.46"/><rect x="2453" y="124" width="9" height="1.5" fill="#6a9955" opacity="0.46"/><rect x="2463" y="124" width="1" height="1.5" fill="#6a9955" opacity="0.46"/><rect x="2438" y="126" width="2" height="1.5" fill="#6a9955" opacity="0.46"/><rect x="2449" y="126" width="2" height="1.5" fill="#6a9955" opacity="0.46"/><rect x="2438" y="128" width="2" height="1.5" fill="#6a9955" opacity="0.46"/><rect x="2445" y="128" width="1" height="1.5" fill="#6a9955" opacity="0.46"/><rect x="2438" y="130" width="6" height="1.5" fill="#6a9955" opacity="0.46"/><rect x="2438" y="134" width="5" height="1.5" fill="#6a9955" opacity="0.46"/><rect x="2444" y="134" width="5" height="1.5" fill="#6a9955" opacity="0.46"/><rect x="2450" y="134" width="8" height="1.5" fill="#6a9955" opacity="0.46"/><rect x="2459" y="134" width="5" height="1.5" fill="#6a9955" opacity="0.46"/><rect x="2465" y="134" width="7" height="1.5" fill="#6a9955" opacity="0.46"/><rect x="2473" y="134" width="6" height="1.5" fill="#6a9955" opacity="0.46"/><rect x="2438" y="136" width="7" height="1.5" fill="#6a9955" opacity="0.46"/><rect x="2446" y="136" width="7" height="1.5" fill="#6a9955" opacity="0.46"/><rect x="2438" y="138" width="6" height="1.5" fill="#6a9955" opacity="0.46"/><rect x="2445" y="138" width="3" height="1.5" fill="#6a9955" opacity="0.46"/><rect x="2449" y="138" width="9" height="1.5" fill="#6a9955" opacity="0.46"/><rect x="2459" y="138" width="3" height="1.5" fill="#6a9955" opacity="0.46"/><rect x="2463" y="138" width="3" height="1.5" fill="#6a9955" opacity="0.46"/><rect x="2438" y="140" width="6" height="1.5" fill="#6a9955" opacity="0.46"/><rect x="2445" y="140" width="8" height="1.5" fill="#6a9955" opacity="0.46"/><rect x="2454" y="140" width="8" height="1.5" fill="#6a9955" opacity="0.46"/><rect x="2463" y="140" width="3" height="1.5" fill="#6a9955" opacity="0.46"/><rect x="2438" y="142" width="3" height="1.5" fill="#6a9955" opacity="0.46"/><rect x="2442" y="142" width="8" height="1.5" fill="#6a9955" opacity="0.46"/><rect x="2451" y="142" width="8" height="1.5" fill="#6a9955" opacity="0.46"/><rect x="2460" y="142" width="5" height="1.5" fill="#6a9955" opacity="0.46"/><rect x="2438" y="144" width="8" height="1.5" fill="#6a9955" opacity="0.46"/><rect x="2447" y="144" width="7" height="1.5" fill="#6a9955" opacity="0.46"/><rect x="2455" y="144" width="8" height="1.5" fill="#6a9955" opacity="0.46"/><rect x="2464" y="144" width="7" height="1.5" fill="#6a9955" opacity="0.46"/><rect x="2438" y="152" width="6" height="1.5" fill="#6a9955" opacity="0.46"/><rect x="2445" y="152" width="5" height="1.5" fill="#6a9955" opacity="0.46"/><rect x="2451" y="152" width="8" height="1.5" fill="#6a9955" opacity="0.46"/><rect x="2460" y="152" width="6" height="1.5" fill="#6a9955" opacity="0.46"/><rect x="2467" y="152" width="8" height="1.5" fill="#6a9955" opacity="0.46"/><rect x="2476" y="152" width="5" height="1.5" fill="#6a9955" opacity="0.46"/><rect x="2482" y="152" width="3" height="1.5" fill="#6a9955" opacity="0.46"/><rect x="2486" y="152" width="6" height="1.5" fill="#6a9955" opacity="0.46"/><rect x="2493" y="152" width="3" height="1.5" fill="#6a9955" opacity="0.46"/><rect x="2438" y="154" width="4" height="1.5" fill="#6a9955" opacity="0.46"/><rect x="2443" y="154" width="7" height="1.5" fill="#6a9955" opacity="0.46"/><rect x="2451" y="154" width="3" height="1.5" fill="#6a9955" opacity="0.46"/><rect x="2455" y="154" width="6" height="1.5" fill="#6a9955" opacity="0.46"/><rect x="2462" y="154" width="3" height="1.5" fill="#6a9955" opacity="0.46"/><rect x="2466" y="154" width="4" height="1.5" fill="#6a9955" opacity="0.46"/><rect x="2471" y="154" width="9" height="1.5" fill="#6a9955" opacity="0.46"/><rect x="2481" y="154" width="3" height="1.5" fill="#6a9955" opacity="0.46"/><rect x="2438" y="156" width="4" height="1.5" fill="#6a9955" opacity="0.46"/><rect x="2443" y="156" width="8" height="1.5" fill="#6a9955" opacity="0.46"/><rect x="2452" y="156" width="4" height="1.5" fill="#6a9955" opacity="0.46"/><rect x="2457" y="156" width="6" height="1.5" fill="#6a9955" opacity="0.46"/><rect x="2438" y="158" width="6" height="1.5" fill="#6a9955" opacity="0.46"/><rect x="2445" y="158" width="8" height="1.5" fill="#6a9955" opacity="0.46"/><rect x="2438" y="162" width="6" height="1.5" fill="#6a9955" opacity="0.46"/><rect x="2445" y="162" width="3" height="1.5" fill="#6a9955" opacity="0.46"/><rect x="2449" y="162" width="4" height="1.5" fill="#6a9955" opacity="0.46"/><rect x="2454" y="162" width="6" height="1.5" fill="#6a9955" opacity="0.46"/><rect x="2461" y="162" width="6" height="1.5" fill="#6a9955" opacity="0.46"/><rect x="2468" y="162" width="4" height="1.5" fill="#6a9955" opacity="0.46"/><rect x="2438" y="164" width="5" height="1.5" fill="#6a9955" opacity="0.46"/><rect x="2444" y="164" width="4" height="1.5" fill="#6a9955" opacity="0.46"/><rect x="2449" y="164" width="9" height="1.5" fill="#6a9955" opacity="0.46"/><rect x="2459" y="164" width="6" height="1.5" fill="#6a9955" opacity="0.46"/><rect x="2466" y="164" width="9" height="1.5" fill="#6a9955" opacity="0.46"/><rect x="2476" y="164" width="7" height="1.5" fill="#6a9955" opacity="0.46"/><rect x="2484" y="164" width="2" height="1.5" fill="#6a9955" opacity="0.46"/><rect x="2438" y="166" width="8" height="1.5" fill="#6a9955" opacity="0.46"/><rect x="2447" y="166" width="6" height="1.5" fill="#6a9955" opacity="0.46"/><rect x="2454" y="166" width="5" height="1.5" fill="#6a9955" opacity="0.46"/><rect x="2460" y="166" width="8" height="1.5" fill="#6a9955" opacity="0.46"/><rect x="2438" y="168" width="6" height="1.5" fill="#6a9955" opacity="0.46"/><rect x="2445" y="168" width="4" height="1.5" fill="#6a9955" opacity="0.46"/><rect x="2450" y="168" width="4" height="1.5" fill="#6a9955" opacity="0.46"/><rect x="2455" y="168" width="3" height="1.5" fill="#6a9955" opacity="0.46"/><rect x="2459" y="168" width="4" height="1.5" fill="#6a9955" opacity="0.46"/><rect x="2464" y="168" width="4" height="1.5" fill="#6a9955" opacity="0.46"/><rect x="2469" y="168" width="4" height="1.5" fill="#6a9955" opacity="0.46"/><rect x="2474" y="168" width="1" height="1.5" fill="#6a9955" opacity="0.46"/><rect x="2438" y="170" width="4" height="1.5" fill="#6a9955" opacity="0.46"/><rect x="2443" y="170" width="3" height="1.5" fill="#6a9955" opacity="0.46"/><rect x="2447" y="170" width="6" height="1.5" fill="#6a9955" opacity="0.46"/><rect x="2454" y="170" width="9" height="1.5" fill="#6a9955" opacity="0.46"/><rect x="2464" y="170" width="7" height="1.5" fill="#6a9955" opacity="0.46"/><rect x="2445" y="174" width="1" height="1.5" fill="#6a9955" opacity="0.46"/><rect x="2438" y="176" width="5" height="1.5" fill="#6a9955" opacity="0.46"/><rect x="2441" y="178" width="5" height="1.5" fill="#6a9955" opacity="0.46"/><rect x="2447" y="178" width="3" height="1.5" fill="#6a9955" opacity="0.46"/><rect x="2451" y="178" width="4" height="1.5" fill="#6a9955" opacity="0.46"/><rect x="2456" y="178" width="6" height="1.5" fill="#6a9955" opacity="0.46"/><rect x="2463" y="178" width="7" height="1.5" fill="#6a9955" opacity="0.46"/><rect x="2471" y="178" width="5" height="1.5" fill="#6a9955" opacity="0.46"/><rect x="2477" y="178" width="7" height="1.5" fill="#6a9955" opacity="0.46"/><rect x="2485" y="178" width="7" height="1.5" fill="#6a9955" opacity="0.46"/><rect x="2493" y="178" width="5" height="1.5" fill="#6a9955" opacity="0.46"/><rect x="2499" y="178" width="2" height="1.5" fill="#6a9955" opacity="0.46"/><rect x="2438" y="182" width="8" height="1.5" fill="#6a9955" opacity="0.46"/><rect x="2447" y="182" width="9" height="1.5" fill="#6a9955" opacity="0.46"/><rect x="2457" y="182" width="7" height="1.5" fill="#6a9955" opacity="0.46"/><rect x="2465" y="182" width="7" height="1.5" fill="#6a9955" opacity="0.46"/><rect x="2473" y="182" width="8" height="1.5" fill="#6a9955" opacity="0.46"/><rect x="2482" y="182" width="8" height="1.5" fill="#6a9955" opacity="0.46"/><rect x="2491" y="182" width="8" height="1.5" fill="#6a9955" opacity="0.46"/><rect x="2500" y="182" width="3" height="1.5" fill="#6a9955" opacity="0.46"/><rect x="2504" y="182" width="4" height="1.5" fill="#6a9955" opacity="0.46"/><rect x="2438" y="184" width="9" height="1.5" fill="#6a9955" opacity="0.46"/><rect x="2448" y="184" width="9" height="1.5" fill="#6a9955" opacity="0.46"/><rect x="2458" y="184" width="9" height="1.5" fill="#6a9955" opacity="0.46"/><rect x="2468" y="184" width="1" height="1.5" fill="#6a9955" opacity="0.46"/><rect x="2441" y="186" width="9" height="1.5" fill="#6a9955" opacity="0.46"/><rect x="2451" y="186" width="1" height="1.5" fill="#6a9955" opacity="0.46"/><rect x="2441" y="188" width="6" height="1.5" fill="#6a9955" opacity="0.46"/><rect x="2448" y="188" width="4" height="1.5" fill="#6a9955" opacity="0.46"/><rect x="2438" y="196" width="6" height="1.5" fill="#6a9955" opacity="0.46"/><rect x="2445" y="196" width="6" height="1.5" fill="#6a9955" opacity="0.46"/><rect x="2452" y="196" width="3" height="1.5" fill="#6a9955" opacity="0.46"/><rect x="2456" y="196" width="6" height="1.5" fill="#6a9955" opacity="0.46"/><rect x="2463" y="196" width="8" height="1.5" fill="#6a9955" opacity="0.46"/><rect x="2472" y="196" width="6" height="1.5" fill="#6a9955" opacity="0.46"/><rect x="2479" y="196" width="3" height="1.5" fill="#6a9955" opacity="0.46"/><rect x="2483" y="196" width="4" height="1.5" fill="#6a9955" opacity="0.46"/><rect x="2488" y="196" width="3" height="1.5" fill="#6a9955" opacity="0.46"/><rect x="2492" y="196" width="1" height="1.5" fill="#6a9955" opacity="0.46"/><rect x="2438" y="198" width="6" height="1.5" fill="#6a9955" opacity="0.46"/><rect x="2445" y="198" width="4" height="1.5" fill="#6a9955" opacity="0.46"/><rect x="2450" y="198" width="3" height="1.5" fill="#6a9955" opacity="0.46"/><rect x="2454" y="198" width="5" height="1.5" fill="#6a9955" opacity="0.46"/><rect x="2460" y="198" width="7" height="1.5" fill="#6a9955" opacity="0.46"/><rect x="2468" y="198" width="3" height="1.5" fill="#6a9955" opacity="0.46"/><rect x="2472" y="198" width="3" height="1.5" fill="#6a9955" opacity="0.46"/><rect x="2476" y="198" width="3" height="1.5" fill="#6a9955" opacity="0.46"/><rect x="2480" y="198" width="7" height="1.5" fill="#6a9955" opacity="0.46"/><rect x="2488" y="198" width="4" height="1.5" fill="#6a9955" opacity="0.46"/><rect x="2493" y="198" width="1" height="1.5" fill="#6a9955" opacity="0.46"/><rect x="2438" y="200" width="3" height="1.5" fill="#6a9955" opacity="0.46"/><rect x="2442" y="200" width="5" height="1.5" fill="#6a9955" opacity="0.46"/><rect x="2448" y="200" width="7" height="1.5" fill="#6a9955" opacity="0.46"/><rect x="2456" y="200" width="3" height="1.5" fill="#6a9955" opacity="0.46"/><rect x="2438" y="204" width="3" height="1.5" fill="#6a9955" opacity="0.46"/><rect x="2442" y="204" width="9" height="1.5" fill="#6a9955" opacity="0.46"/><rect x="2452" y="204" width="4" height="1.5" fill="#6a9955" opacity="0.46"/><rect x="2457" y="204" width="7" height="1.5" fill="#6a9955" opacity="0.46"/><rect x="2465" y="204" width="6" height="1.5" fill="#6a9955" opacity="0.46"/><rect x="2472" y="204" width="4" height="1.5" fill="#6a9955" opacity="0.46"/><rect x="2477" y="204" width="8" height="1.5" fill="#6a9955" opacity="0.46"/><rect x="2486" y="204" width="5" height="1.5" fill="#6a9955" opacity="0.46"/><rect x="2492" y="204" width="5" height="1.5" fill="#6a9955" opacity="0.46"/><rect x="2498" y="204" width="7" height="1.5" fill="#6a9955" opacity="0.46"/><rect x="2506" y="204" width="5" height="1.5" fill="#6a9955" opacity="0.46"/><rect x="2438" y="206" width="6" height="1.5" fill="#6a9955" opacity="0.46"/><rect x="2445" y="206" width="3" height="1.5" fill="#6a9955" opacity="0.46"/><rect x="2449" y="206" width="3" height="1.5" fill="#6a9955" opacity="0.46"/><rect x="2453" y="206" width="9" height="1.5" fill="#6a9955" opacity="0.46"/><rect x="2463" y="206" width="6" height="1.5" fill="#6a9955" opacity="0.46"/><rect x="2470" y="206" width="5" height="1.5" fill="#6a9955" opacity="0.46"/><rect x="2438" y="210" width="6" height="1.5" fill="#6a9955" opacity="0.46"/><rect x="2445" y="210" width="6" height="1.5" fill="#6a9955" opacity="0.46"/><rect x="2452" y="210" width="5" height="1.5" fill="#6a9955" opacity="0.46"/><rect x="2458" y="210" width="3" height="1.5" fill="#6a9955" opacity="0.46"/><rect x="2462" y="210" width="4" height="1.5" fill="#6a9955" opacity="0.46"/><rect x="2467" y="210" width="3" height="1.5" fill="#6a9955" opacity="0.46"/><rect x="2471" y="210" width="8" height="1.5" fill="#6a9955" opacity="0.46"/><rect x="2480" y="210" width="5" height="1.5" fill="#6a9955" opacity="0.46"/><rect x="2486" y="210" width="8" height="1.5" fill="#6a9955" opacity="0.46"/><rect x="2495" y="210" width="5" height="1.5" fill="#6a9955" opacity="0.46"/><rect x="2501" y="210" width="6" height="1.5" fill="#6a9955" opacity="0.46"/><rect x="2508" y="210" width="8" height="1.5" fill="#6a9955" opacity="0.46"/><rect x="2438" y="212" width="8" height="1.5" fill="#6a9955" opacity="0.46"/><rect x="2447" y="212" width="4" height="1.5" fill="#6a9955" opacity="0.46"/><rect x="2452" y="212" width="7" height="1.5" fill="#6a9955" opacity="0.46"/><rect x="2460" y="212" width="3" height="1.5" fill="#6a9955" opacity="0.46"/><rect x="2464" y="212" width="4" height="1.5" fill="#6a9955" opacity="0.46"/><rect x="2469" y="212" width="7" height="1.5" fill="#6a9955" opacity="0.46"/><rect x="2477" y="212" width="3" height="1.5" fill="#6a9955" opacity="0.46"/><rect x="2438" y="214" width="2" height="1.5" fill="#6a9955" opacity="0.46"/><rect x="2441" y="214" width="3" height="1.5" fill="#6a9955" opacity="0.46"/><rect x="2445" y="214" width="4" height="1.5" fill="#6a9955" opacity="0.46"/><rect x="2450" y="214" width="1" height="1.5" fill="#6a9955" opacity="0.46"/><rect x="2452" y="214" width="30" height="1.5" fill="#6a9955" opacity="0.46"/><rect x="2438" y="216" width="2" height="1.5" fill="#6a9955" opacity="0.46"/><rect x="2441" y="216" width="3" height="1.5" fill="#6a9955" opacity="0.46"/><rect x="2445" y="216" width="7" height="1.5" fill="#6a9955" opacity="0.46"/><rect x="2453" y="216" width="1" height="1.5" fill="#6a9955" opacity="0.46"/><rect x="2455" y="216" width="30" height="1.5" fill="#6a9955" opacity="0.46"/><rect x="2438" y="220" width="2" height="1.5" fill="#6a9955" opacity="0.46"/><rect x="2441" y="220" width="2" height="1.5" fill="#6a9955" opacity="0.46"/><rect x="2444" y="220" width="3" height="1.5" fill="#6a9955" opacity="0.46"/><rect x="2448" y="220" width="6" height="1.5" fill="#6a9955" opacity="0.46"/><rect x="2455" y="220" width="1" height="1.5" fill="#6a9955" opacity="0.46"/><rect x="2457" y="220" width="32" height="1.5" fill="#6a9955" opacity="0.46"/><rect x="2490" y="220" width="8" height="1.5" fill="#6a9955" opacity="0.46"/><rect x="2499" y="220" width="18" height="1.5" fill="#6a9955" opacity="0.46"/><rect x="2518" y="220" width="16" height="1.5" fill="#6a9955" opacity="0.46"/><rect x="2535" y="220" width="7" height="1.5" fill="#6a9955" opacity="0.46"/><rect x="2438" y="222" width="2" height="1.5" fill="#6a9955" opacity="0.46"/><rect x="2441" y="222" width="2" height="1.5" fill="#6a9955" opacity="0.46"/><rect x="2444" y="222" width="3" height="1.5" fill="#6a9955" opacity="0.46"/><rect x="2448" y="222" width="3" height="1.5" fill="#6a9955" opacity="0.46"/><rect x="2452" y="222" width="1" height="1.5" fill="#6a9955" opacity="0.46"/><rect x="2455" y="222" width="21" height="1.5" fill="#6a9955" opacity="0.46"/><rect x="2438" y="224" width="2" height="1.5" fill="#6a9955" opacity="0.46"/><rect x="2441" y="224" width="3" height="1.5" fill="#6a9955" opacity="0.46"/><rect x="2445" y="224" width="3" height="1.5" fill="#6a9955" opacity="0.46"/><rect x="2449" y="224" width="1" height="1.5" fill="#6a9955" opacity="0.46"/><rect x="2451" y="224" width="22" height="1.5" fill="#6a9955" opacity="0.46"/><rect x="2474" y="224" width="18" height="1.5" fill="#6a9955" opacity="0.46"/><rect x="2493" y="224" width="16" height="1.5" fill="#6a9955" opacity="0.46"/><rect x="2510" y="224" width="7" height="1.5" fill="#6a9955" opacity="0.46"/><rect x="2438" y="226" width="2" height="1.5" fill="#6a9955" opacity="0.46"/><rect x="2441" y="226" width="16" height="1.5" fill="#6a9955" opacity="0.46"/><rect x="2438" y="228" width="2" height="1.5" fill="#6a9955" opacity="0.46"/><rect x="2441" y="228" width="45" height="1.5" fill="#6a9955" opacity="0.46"/><rect x="2438" y="232" width="2" height="1.5" fill="#6a9955" opacity="0.46"/><rect x="2441" y="232" width="3" height="1.5" fill="#6a9955" opacity="0.46"/><rect x="2445" y="232" width="9" height="1.5" fill="#6a9955" opacity="0.46"/><rect x="2455" y="232" width="1" height="1.5" fill="#6a9955" opacity="0.46"/><rect x="2457" y="232" width="39" height="1.5" fill="#6a9955" opacity="0.46"/><rect x="2438" y="234" width="2" height="1.5" fill="#6a9955" opacity="0.46"/><rect x="2441" y="234" width="22" height="1.5" fill="#6a9955" opacity="0.46"/><rect x="2438" y="236" width="2" height="1.5" fill="#6a9955" opacity="0.46"/><rect x="2441" y="236" width="33" height="1.5" fill="#6a9955" opacity="0.46"/><rect x="2438" y="238" width="2" height="1.5" fill="#6a9955" opacity="0.46"/><rect x="2441" y="238" width="31" height="1.5" fill="#6a9955" opacity="0.46"/><rect x="2438" y="240" width="2" height="1.5" fill="#6a9955" opacity="0.46"/><rect x="2441" y="240" width="21" height="1.5" fill="#6a9955" opacity="0.46"/><rect x="2438" y="242" width="2" height="1.5" fill="#6a9955" opacity="0.46"/><rect x="2441" y="242" width="3" height="1.5" fill="#6a9955" opacity="0.46"/><rect x="2445" y="242" width="4" height="1.5" fill="#6a9955" opacity="0.46"/><rect x="2450" y="242" width="1" height="1.5" fill="#6a9955" opacity="0.46"/><rect x="2452" y="242" width="24" height="1.5" fill="#6a9955" opacity="0.46"/><rect x="2438" y="244" width="2" height="1.5" fill="#6a9955" opacity="0.46"/><rect x="2441" y="244" width="17" height="1.5" fill="#6a9955" opacity="0.46"/><rect x="2438" y="246" width="2" height="1.5" fill="#6a9955" opacity="0.46"/><rect x="2441" y="246" width="45" height="1.5" fill="#6a9955" opacity="0.46"/><rect x="2438" y="250" width="2" height="1.5" fill="#6a9955" opacity="0.46"/><rect x="2441" y="250" width="57" height="1.5" fill="#6a9955" opacity="0.46"/><rect x="2438" y="254" width="3" height="1.5" fill="#9cdcfe" opacity="0.12"/><rect x="2442" y="254" width="7" height="1.5" fill="#9cdcfe" opacity="0.12"/><rect x="2450" y="254" width="1" height="1.5" fill="#9cdcfe" opacity="0.12"/><rect x="2452" y="254" width="40" height="1.5" fill="#9cdcfe" opacity="0.12"/><rect x="2438" y="256" width="31" height="1.5" fill="#9cdcfe" opacity="0.12"/><rect x="2470" y="256" width="1" height="1.5" fill="#9cdcfe" opacity="0.12"/><rect x="2472" y="256" width="8" height="1.5" fill="#9cdcfe" opacity="0.12"/><rect x="2481" y="256" width="2" height="1.5" fill="#9cdcfe" opacity="0.12"/><rect x="2484" y="256" width="1" height="1.5" fill="#9cdcfe" opacity="0.12"/><rect x="2442" y="258" width="19" height="1.5" fill="#9cdcfe" opacity="0.12"/><rect x="2462" y="258" width="9" height="1.5" fill="#9cdcfe" opacity="0.12"/><rect x="2442" y="260" width="3" height="1.5" fill="#9cdcfe" opacity="0.12"/><rect x="2446" y="260" width="3" height="1.5" fill="#9cdcfe" opacity="0.12"/><rect x="2450" y="260" width="1" height="1.5" fill="#9cdcfe" opacity="0.12"/><rect x="2452" y="260" width="16" height="1.5" fill="#9cdcfe" opacity="0.12"/><rect x="2442" y="262" width="17" height="1.5" fill="#9cdcfe" opacity="0.12"/><rect x="2442" y="264" width="6" height="1.5" fill="#9cdcfe" opacity="0.12"/><rect x="2449" y="264" width="4" height="1.5" fill="#9cdcfe" opacity="0.12"/><rect x="2438" y="266" width="2" height="1.5" fill="#9cdcfe" opacity="0.12"/><rect x="2434" y="270" width="3" height="1.5" fill="#9cdcfe" opacity="0.50"/><rect x="2462" y="254" width="22" height="2" fill="#d18616"/></svg>
<div class="abs" style="left:1905px;top:35px;width:14px;height:769px;border-left:1px solid #010409;border-top:1px solid #010409"></div>
<div class="abs" style="left:1906px;top:537px;width:13px;height:2px;background:#b0b0b0"></div>
<div class="abs" style="left:1910px;top:539px;width:5px;height:5px;background:#a8752a"></div>
<div id="find">
<div class="abs" style="left:0;top:0;width:3px;height:32px;background:#343434"></div>
<svg class="abs" style="left:4px;top:8px" width="16" height="16" viewBox="0 0 16 16" fill="none" stroke="#cccccc" stroke-width="1.1"><path d="M6 3.5 L10.5 8 L6 12.5"/></svg>
<div class="abs" style="left:21px;top:3px;width:161px;height:25px;background:#313131;border:1px solid #3c3c3c;border-radius:2px"></div>
<div class="abs" style="left:28px;top:4px;width:87px;height:25px;line-height:25px;font-size:13px;color:#cccccc;overflow:hidden;white-space:nowrap;letter-spacing:-0.1px">com.xiaojianbang</div>
<span class="abs" style="left:121px;top:3px;line-height:25px;font-size:10px;color:#cccccc">Aa</span>
<span class="abs" style="left:143px;top:2px;line-height:25px;font-size:10.5px;color:#cccccc">ab</span>
<svg class="abs" style="left:140px;top:8px" width="18" height="16" viewBox="0 0 18 16" fill="none" stroke="#cccccc" stroke-width="1"><path d="M1.5 10 V12.5 H16 V10"/></svg>
<svg class="abs" style="left:162px;top:8px" width="16" height="16" viewBox="0 0 16 16" fill="none" stroke="#cccccc" stroke-width="1.1"><rect x="2" y="9.6" width="3" height="3" fill="#cccccc" stroke="none"/><path d="M10.2 2 V9 M7.2 3.8 L13.2 7.2 M13.2 3.8 L7.2 7.2"/></svg>
<span class="abs" style="left:187px;top:5px;line-height:25px;font-size:12px;color:#cccccc;white-space:nowrap">第 1 项，共 1 项</span>
<svg class="abs" style="left:321px;top:8px" width="16" height="16" viewBox="0 0 16 16" fill="none" stroke="#cccccc" stroke-width="1.1"><path d="M8 14 V2.5 M3.5 7 L8 2.5 L12.5 7"/></svg>
<svg class="abs" style="left:346px;top:8px" width="16" height="16" viewBox="0 0 16 16" fill="none" stroke="#cccccc" stroke-width="1.1"><path d="M8 2 V13.5 M3.5 9 L8 13.5 L12.5 9"/></svg>
<svg class="abs" style="left:370px;top:8px" width="16" height="16" viewBox="0 0 16 16" fill="none" stroke="#cccccc" stroke-width="1.1"><path d="M1.5 4 H14.5 M1.5 8 H14.5 M1.5 12 H9.5"/></svg>
<svg class="abs" style="left:395px;top:8px" width="16" height="16" viewBox="0 0 16 16" fill="none" stroke="#cccccc" stroke-width="1.1"><path d="M4 4 L12 12 M12 4 L4 12"/></svg>
</div>
</div>

<div id="panel">
<span class="ptab" style="left:20px">问题</span>
<span class="ptab" style="left:66px">输出</span>
<span class="ptab" style="left:112px">调试控制台</span>
<span class="ptab act" style="left:190px">终端</span>
<span class="ptab" style="left:236px">端口</span>
<div class="abs" style="left:189px;top:28px;width:26px;height:1px;background:#0078d4"></div>
<svg class="abs" style="left:1693px;top:9px" width="16" height="16" viewBox="0 0 16 16" fill="none" stroke="#cccccc" stroke-width="1.1" stroke-linejoin="round"><rect x="2.05" y="2.55" width="12.4" height="11.9" rx="1"/><path d="M8.25 2.55 V14.45"/></svg>
<svg class="abs" style="left:1710px;top:9px" width="14" height="16" viewBox="0 0 14 16" fill="none" stroke="#cccccc" stroke-width="1.1" stroke-linejoin="round"><path d="M3 7 L7.1 11 L11.2 7"/></svg>
<svg class="abs" style="left:1732px;top:9px" width="16" height="16" viewBox="0 0 16 16" fill="none" stroke="#cccccc" stroke-width="1.1" stroke-linejoin="round"><rect x="2.05" y="2.55" width="12.4" height="11.9" rx="1"/><path d="M8.25 2.55 V14.45"/></svg>
<span class="abs" style="left:1752px;top:6px;font-size:11px;line-height:22px;color:#cccccc">frida</span>
<svg class="abs" style="left:1784px;top:9px" width="16" height="16" viewBox="0 0 16 16" fill="none" stroke="#cccccc" stroke-width="1.1" stroke-linejoin="round"><rect x="2.05" y="2.55" width="12.4" height="11.9" rx="1"/><path d="M8.25 2.55 V14.45"/></svg>
<svg class="abs" style="left:1809px;top:9px" width="16" height="16" viewBox="0 0 16 16" fill="none" stroke="#cccccc" stroke-width="1.1" stroke-linejoin="round"><path d="M2.5 4.2 H13.5 M6 4 V2.4 H10 V4 M3.8 4.4 L4.4 14 H11.6 L12.2 4.4"/><path d="M6.4 6.4 V12 M8 6.4 V12 M9.6 6.4 V12" stroke="#a23aa2" stroke-width="0.9"/></svg>
<svg class="abs" style="left:1836px;top:10px" width="16" height="16" viewBox="0 0 16 16" fill="#cccccc"><circle cx="2.2" cy="8" r="1.05"/><circle cx="8" cy="8" r="1.05"/><circle cx="13.8" cy="8" r="1.05"/></svg>
<svg class="abs" style="left:1862px;top:9px" width="16" height="16" viewBox="0 0 16 16" fill="none" stroke="#cccccc" stroke-width="1.1" stroke-linejoin="round"><path d="M3.5 10 L8 5.5 L12.5 10"/></svg>
<svg class="abs" style="left:1888px;top:9px" width="16" height="16" viewBox="0 0 16 16" fill="none" stroke="#cccccc" stroke-width="1.1" stroke-linejoin="round"><path d="M3.8 3.8 L12.2 12.2 M12.2 3.8 L3.8 12.2"/></svg>
<div id="term">
<div class="tl" style="top:38.5px">    at _make (frida/node_modules/frida-java-bridge/lib/class-factory.js:165)</div>
<div class="tl" style="top:55.5px">    at use (frida/node_modules/frida-java-bridge/lib/class-factory.js:62)</div>
<div class="tl" style="top:72.5px">    at use (frida/node_modules/frida-java-bridge/index.js:258)</div>
<div class="tl" style="top:89.5px">    at &lt;anonymous&gt; (D:\<b class="cj">新桌面</b>\MC<b class="cj">小杨的</b>python<b class="cj">学习文件夹</b>\JS<b class="cj">脚本</b>\<b class="cj">嘟嘟牛</b>\1.js:93)</div>
<div class="tl" style="top:106.5px">    at &lt;anonymous&gt; (frida/node_modules/frida-java-bridge/lib/vm.js:12)</div>
<div class="tl" style="top:123.5px">    at _performPendingVmOps (frida/node_modules/frida-java-bridge/index.js:250)</div>
<div class="tl" style="top:140.5px">    at &lt;anonymous&gt; (frida/node_modules/frida-java-bridge/index.js:225)</div>
<div class="tl" style="top:157.5px">    at &lt;anonymous&gt; (frida/node_modules/frida-java-bridge/lib/vm.js:12)</div>
<div class="tl" style="top:174.5px">    at _performPendingVmOpsWhenReady (frida/node_modules/frida-java-bridge/index.js:244)</div>
<div class="tl" style="top:191.5px">    at perform (frida/node_modules/frida-java-bridge/index.js:204)</div>
<div class="tl" style="top:208.5px">    at &lt;eval&gt; (D:\<b class="cj">新桌面</b>\MC<b class="cj">小杨的</b>python<b class="cj">学习文件夹</b>\JS<b class="cj">脚本</b>\<b class="cj">嘟嘟牛</b>\1.js:101)</div>
<div class="tl" style="top:225.5px">Error: java.lang.ClassNotFoundException: Didn't find class "com.xiaojianbang.app.Dynamic" on path: DexPathList[[zip file "/data/app/com.xiaojianbang.app-pqs83LXVjJVFuAMrIbBjrw==/base.apk"],nativeLibraryDirectories=[/data/app/com.xiaojianbang.app-pqs83LXVjJVFuAMrIbBjrw=</div>
<div class="tl" style="top:242.5px">=/lib/x86_64, /data/app/com.xiaojianbang.app-pqs83LXVjJVFuAMrIbBjrw==/base.apk!/lib/x86_64, /system/lib64, /system/vendor/lib64]]</div>
<div class="tl" style="top:259.5px">    at &lt;anonymous&gt; (frida/node_modules/frida-java-bridge/lib/env.js:124)</div>
<div class="tl" style="top:276.5px">    at &lt;anonymous&gt; (frida/node_modules/frida-java-bridge/lib/class-factory.js:502)</div>
<div class="tl" style="top:293.5px">    at value (frida/node_modules/frida-java-bridge/lib/class-factory.js:949)</div>
<div class="tl" style="top:310.5px">    at value (frida/node_modules/frida-java-bridge/lib/class-factory.js:954)</div>
<div class="tl" style="top:327.5px">    at _make (frida/node_modules/frida-java-bridge/lib/class-factory.js:165)</div>
<div class="tl" style="top:344.5px">    at use (frida/node_modules/frida-java-bridge/lib/class-factory.js:62)</div>
<div class="tl" style="top:361.5px">    at use (frida/node_modules/frida-java-bridge/index.js:258)</div>
<div class="tl" style="top:378.5px">    at &lt;anonymous&gt; (D:\<b class="cj">新桌面</b>\MC<b class="cj">小杨的</b>python<b class="cj">学习文件夹</b>\JS<b class="cj">脚本</b>\<b class="cj">嘟嘟牛</b>\1.js:93)</div>
<div class="tl" style="top:395.5px">    at &lt;anonymous&gt; (frida/node_modules/frida-java-bridge/lib/vm.js:12)</div>
<div class="tl" style="top:412.5px">    at _performPendingVmOps (frida/node_modules/frida-java-bridge/index.js:250)</div>
<div class="tl" style="top:429.5px">    at &lt;anonymous&gt; (frida/node_modules/frida-java-bridge/index.js:225)</div>
<div class="tl" style="top:446.5px">    at &lt;anonymous&gt; (frida/node_modules/frida-java-bridge/lib/vm.js:12)</div>
<div class="tl" style="top:463.5px">    at _performPendingVmOpsWhenReady (frida/node_modules/frida-java-bridge/index.js:244)</div>
<div class="tl" style="top:480.5px">    at perform (frida/node_modules/frida-java-bridge/index.js:204)</div>
<div class="tl" style="top:497.5px">    at &lt;eval&gt; (D:\<b class="cj">新桌面</b>\MC<b class="cj">小杨的</b>python<b class="cj">学习文件夹</b>\JS<b class="cj">脚本</b>\<b class="cj">嘟嘟牛</b>\1.js:101)</div>
</div>
<div class="abs" style="left:20px;top:514px;width:7px;height:16px;border:1px solid #d0d0d0"></div>
<div class="abs" style="left:1905px;top:38px;width:14px;height:493px;border-left:1px solid #010409;border-top:1px solid #010409"></div>
<div class="abs" style="left:1906px;top:511px;width:13px;height:20px;background:#3c3c3c"></div>
<svg class="abs" style="left:294px;top:213px" width="480" height="44" viewBox="0 0 480 44"><rect x="4.15" y="4.15" width="464.5" height="28.2" rx="0.8" fill="none" stroke="#f0bd33" stroke-width="4.7"/></svg>
</div>

<div id="status">
<div class="abs" style="left:0;top:0;width:34px;height:21px;background:#0078d4"></div>
<svg class="abs" style="left:9px;top:2px" width="16" height="16" viewBox="0 0 16 16" fill="none" stroke="#ffffff" stroke-width="1.2"><path d="M3.4 6.6 L7 10.2 L3.4 13.8 M12.6 2.2 L9 5.8 L12.6 9.4"/></svg>
<svg class="abs" style="left:42px;top:4px" width="14" height="14" viewBox="0 0 16 16" fill="none" stroke="#cccccc" stroke-width="1.1"><circle cx="8" cy="8" r="6.4"/><path d="M5.4 5.4 L10.6 10.6 M10.6 5.4 L5.4 10.6"/></svg>
<span class="s" style="left:59px">0</span>
<svg class="abs" style="left:69px;top:4px" width="14" height="14" viewBox="0 0 16 16" fill="none" stroke="#cccccc" stroke-width="1.1" stroke-linejoin="round"><path d="M8 2 L14.6 14 H1.4 Z M8 6.4 V10.4 M8 11.6 V12.8"/></svg>
<span class="s" style="left:86px">0</span>
<svg class="abs" style="left:109px;top:4px" width="14" height="14" viewBox="0 0 16 16" fill="none" stroke="#cccccc" stroke-width="1.1" stroke-linejoin="round"><path d="M8 6.4 L4.6 14.6 M8 6.4 L11.4 14.6 M6 11.4 H10 M4.8 3 Q3.2 5.6 4.8 8.4 M11.2 3 Q12.8 5.6 11.2 8.4 M2.6 1.6 Q0 5.8 2.6 10 M13.4 1.6 Q16 5.8 13.4 10"/><circle cx="8" cy="5.6" r="1"/></svg>
<span class="s" style="left:126px">0</span>
<span class="s" style="left:2128px">行 93，列 5 (已选择238)</span>
<span class="s" style="left:2272px">空格: 4</span>
<span class="s" style="left:2324px">UTF-8</span>
<span class="s" style="left:2372px">CRLF</span>
<span class="s" style="left:2414px;font-size:11px">{&#8201;}</span>
<span class="s" style="left:2432px">JavaScript</span>
<svg class="abs" style="left:2499px;top:5px" width="16" height="12" viewBox="0 0 24 18" fill="#cccccc"><path d="M6 1.6 H21.6 V6 H10.6 V8.2 H21.6 V12.6 H15.6 V16.6 H10.6 V12.6 H6 Z M1.4 8.2 H5 V12.6 H1.4 Z"/></svg>
<svg class="abs" style="left:2530px;top:3px" width="16" height="16" viewBox="0 0 16 16" fill="none" stroke="#cccccc" stroke-width="1.1" stroke-linejoin="round"><path d="M8 2 C5.4 2 4 3.8 4 6.2 V9.6 L2.8 11.8 H13.2 L12 9.6 V7.4 M6.6 13.4 Q8 14.8 9.4 13.4"/><circle cx="11.8" cy="3.8" r="2.2" fill="#cccccc" stroke="none"/></svg>
</div>

<svg class="abs" style="left:2409px;top:141px" width="52" height="52" viewBox="0 0 52 52">
<defs><linearGradient id="rg" x1="0.1" y1="0.1" x2="0.9" y2="0.9"><stop offset="0" stop-color="#6fd6ea"/><stop offset="0.5" stop-color="#b8b0ea"/><stop offset="0.85" stop-color="#f5a0d0"/><stop offset="1" stop-color="#f5a0d0"/></linearGradient></defs>
<circle cx="26" cy="26" r="22" fill="#666666" fill-opacity="0.93"/>
<circle cx="26" cy="26" r="22" fill="none" stroke="url(#rg)" stroke-width="4.2"/>
<g fill="#000" stroke="#000" stroke-width="1.2" stroke-linejoin="round">
<path d="M16.2 17.1 L18.6 16 L23.6 18.5 L21.4 19.6 Z"/>
<path d="M24.8 20.8 L32.8 16.4 L35.6 17.2 L27.4 22 Z"/>
<path d="M13.4 22 L21.6 26.4 L22.6 28 L22.4 30 L13.6 24.8 Z"/>
<path d="M38.4 21.6 L38.2 24.2 L33.8 27 L33.6 24.6 Z"/>
<path d="M21 31.8 L23.2 32.8 L23.6 38.6 L21.4 37.2 Z"/>
<path d="M28.4 29 L31.4 27.2 L31.4 36.2 L28.6 38.6 Z"/>
</g>
</svg>
<svg class="abs" style="left:2502px;top:991px" width="54" height="54" viewBox="0 0 54 54">
<defs><radialGradient id="ug" cx="0.5" cy="0.5" r="0.5"><stop offset="0" stop-color="#eef1fa"/><stop offset="0.7" stop-color="#e3e8f8"/><stop offset="0.93" stop-color="#cbd6fb"/><stop offset="1" stop-color="#f2f5ff"/></radialGradient><linearGradient id="ub" x1="0" y1="0" x2="0" y2="1"><stop offset="0" stop-color="#7b9cff"/><stop offset="1" stop-color="#4a70f4"/></linearGradient><linearGradient id="uc" x1="0" y1="0" x2="0" y2="1"><stop offset="0" stop-color="#d6d8dc"/><stop offset="1" stop-color="#a9abb0"/></linearGradient>
<radialGradient id="us" cx="0.5" cy="0.5" r="0.5"><stop offset="0.85" stop-color="#000" stop-opacity="0.5"/><stop offset="1" stop-color="#000" stop-opacity="0"/></radialGradient></defs>
<circle cx="27.6" cy="27" r="27" fill="url(#us)"/>
<circle cx="26.2" cy="25.4" r="25.3" fill="url(#ug)"/>
<rect x="20.6" y="12.9" width="11.2" height="6.2" fill="url(#uc)"/><rect x="22.6" y="15" width="2" height="1.8" fill="#7f8188"/><rect x="27" y="15" width="2" height="1.8" fill="#7f8188"/>
<path d="M17.1 19 H35.1 V31.4 C35.1 37 31 40.8 26.1 40.8 C21.2 40.8 17.1 37 17.1 31.4 Z" fill="url(#ub)"/>
</svg>

</body>
</html>
